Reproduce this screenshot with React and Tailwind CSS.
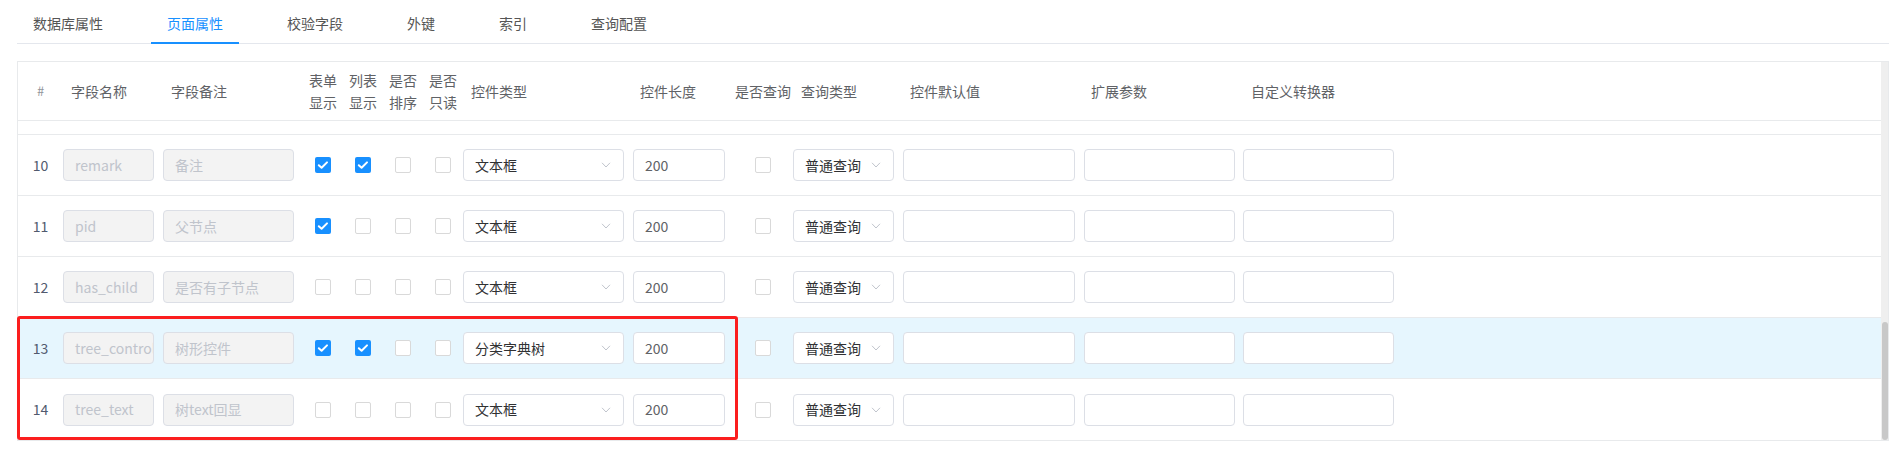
import React from "react";

const FONT = { fontFamily: '"Noto Sans CJK SC", "Noto Sans", sans-serif' };

const GRID =
  "grid grid-cols-[45px_100px_140px_40px_40px_40px_40px_170px_100px_60px_110px_181px_159px_1fr]";

const tabs = ["数据库属性", "页面属性", "校验字段", "外键", "索引", "查询配置"];

const rows = [
  { n: 10, name: "remark", note: "备注", checks: [1, 1, 0, 0], type: "文本框" },
  { n: 11, name: "pid", note: "父节点", checks: [1, 0, 0, 0], type: "文本框" },
  { n: 12, name: "has_child", note: "是否有子节点", checks: [0, 0, 0, 0], type: "文本框" },
  { n: 13, name: "tree_control", note: "树形控件", checks: [1, 1, 0, 0], type: "分类字典树", hl: true },
  { n: 14, name: "tree_text", note: "树text回显", checks: [0, 0, 0, 0], type: "文本框" },
];

function Checkbox({ checked }) {
  if (checked) {
    return (
      <span className="flex h-4 w-4 items-center justify-center rounded-[2px] bg-[#1890ff]">
        <svg width="16" height="16" viewBox="0 0 16 16">
          <polyline
            points="3.8,8.2 6.6,10.8 12,5.4"
            fill="none"
            stroke="#fff"
            strokeWidth="2"
            strokeLinecap="round"
            strokeLinejoin="round"
          />
        </svg>
      </span>
    );
  }
  return <span className="block h-4 w-4 rounded-[2px] border border-[#d9d9d9] bg-white" />;
}

function Chevron() {
  return (
    <svg width="10" height="6" viewBox="0 0 10 6" className="shrink-0">
      <polyline points="1,0.8 5,5 9,0.8" fill="none" stroke="#c0c4cc" strokeWidth="1" />
    </svg>
  );
}

function DisabledInput({ value, w }) {
  return (
    <div
      className={`flex h-[32px] items-center overflow-hidden whitespace-nowrap rounded-[4px] border border-[#dcdfe6] bg-[#f3f3f3] px-[11px] text-[14px] text-[#c0c4cc] ${w}`}
    >
      {value}
    </div>
  );
}

function Input({ value, w }) {
  return (
    <div
      className={`flex h-[32px] items-center rounded-[4px] border border-[#dcdfe6] bg-white px-[11px] text-[14px] text-[#606266] ${w}`}
    >
      {value}
    </div>
  );
}

function Select({ value, w }) {
  return (
    <div
      className={`flex h-[32px] items-center justify-between rounded-[4px] border border-[#dcdfe6] bg-white pl-[11px] pr-[12px] text-[14px] text-[#303133] ${w}`}
    >
      <span className="whitespace-nowrap">{value}</span>
      <Chevron />
    </div>
  );
}

function Row({ r }) {
  return (
    <div
      className={`${GRID} h-[61px] items-center border-b border-[#e8eaec] ${
        r.hl ? "bg-[#e6f6fe]" : "bg-white"
      }`}
    >
      <div className="text-center text-[14px] text-[#515a6e]">{r.n}</div>
      <div>
        <DisabledInput value={r.name} w="w-[91px]" />
      </div>
      <div>
        <DisabledInput value={r.note} w="w-[131px]" />
      </div>
      {r.checks.map((c, i) => (
        <div key={i} className="flex justify-center">
          <Checkbox checked={c} />
        </div>
      ))}
      <div>
        <Select value={r.type} w="w-[161px]" />
      </div>
      <div>
        <Input value="200" w="w-[92px]" />
      </div>
      <div className="flex justify-center">
        <Checkbox checked={0} />
      </div>
      <div>
        <Select value="普通查询" w="w-[101px]" />
      </div>
      <div>
        <Input value="" w="w-[172px]" />
      </div>
      <div>
        <Input value="" w="w-[151px]" />
      </div>
      <div>
        <Input value="" w="w-[151px]" />
      </div>
    </div>
  );
}

export default function App() {
  return (
    <div className="relative h-[457px] w-[1901px] bg-white pl-[17px] pr-[12px]" style={FONT}>
      {/* Tabs */}
      <div className="flex h-[44px] gap-8 border-b border-[#e4e7ed]">
        {tabs.map((t, i) => (
          <div
            key={t}
            className={`relative flex items-center px-4 pt-[4px] text-[14px] ${
              i === 1 ? "text-[#1890ff]" : "text-[#555555]"
            }`}
          >
            {t}
            {i === 1 && (
              <span className="absolute bottom-[-1px] left-0 right-0 h-[2px] bg-[#1890ff]" />
            )}
          </div>
        ))}
      </div>

      {/* Table */}
      <div className="relative mt-[17px] border border-[#e8eaec]">
        {/* Header */}
        <div className={`${GRID} h-[59px] items-center border-b border-[#e8eaec] text-[14px] text-[#606266]`}>
          <div className="text-center text-[13px] text-[#909399]">#</div>
          <div className="pl-[8px]">字段名称</div>
          <div className="pl-[8px]">字段备注</div>
          <div className="text-center leading-[22px]">表单<br />显示</div>
          <div className="text-center leading-[22px]">列表<br />显示</div>
          <div className="text-center leading-[22px]">是否<br />排序</div>
          <div className="text-center leading-[22px]">是否<br />只读</div>
          <div className="pl-[8px]">控件类型</div>
          <div className="pl-[7px]">控件长度</div>
          <div className="whitespace-nowrap pl-[2px]">是否查询</div>
          <div className="pl-[8px]">查询类型</div>
          <div className="pl-[7px]">控件默认值</div>
          <div className="pl-[7px]">扩展参数</div>
          <div className="pl-[8px]">自定义转换器</div>
        </div>

        {/* partially scrolled row */}
        <div className="h-[14px] border-b border-[#e8eaec]" />

        {rows.map((r, i) => (
          <div key={r.n} className={i === rows.length - 1 ? "[&>div]:border-b-0" : ""}>
            <Row r={r} />
          </div>
        ))}

        {/* scrollbar */}
        <div className="absolute bottom-0 right-0 top-0 w-[7px] bg-[#efefef]">
          <div className="absolute bottom-0 left-[1px] right-0 h-[118px] rounded-[3px] bg-[#c8c8c8]" />
        </div>
      </div>

      {/* highlight box */}
      <div className="pointer-events-none absolute left-[17px] top-[316px] h-[124px] w-[721px] rounded-[3px] border-[3px] border-[#fb1e1e]" />
    </div>
  );
}
